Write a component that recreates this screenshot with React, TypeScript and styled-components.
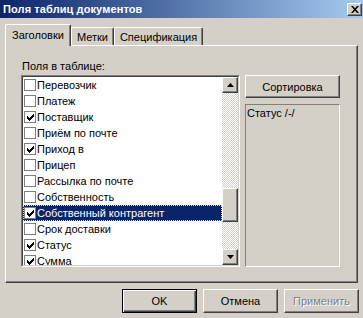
import React from 'react';
import styled, { createGlobalStyle, css } from 'styled-components';

const GlobalStyle = createGlobalStyle`
  html, body {
    margin: 0;
    padding: 0;
    background: #d4d0c8;
  }
  body {
    font-family: "Liberation Sans", Arial, sans-serif;
    font-size: 11px;
    color: #000;
  }
  * {
    box-sizing: border-box;
  }
`;

const raised = css`
  border: 1px solid;
  border-color: #fff #404040 #404040 #fff;
  box-shadow: inset -1px -1px 0 #808080;
  background: #d4d0c8;
`;

const Window = styled.div`
  width: 363px;
  height: 318px;
  display: flex;
  flex-direction: column;
  background: #d4d0c8;
  overflow: hidden;
`;

const TitleBar = styled.div`
  height: 18px;
  display: flex;
  align-items: center;
  justify-content: space-between;
  padding: 0 1px 0 3px;
  background: linear-gradient(to right, #0a246a, #a6caf0);
`;

const Title = styled.span`
  color: #fff;
  font-weight: bold;
  font-size: 11px;
  letter-spacing: 0.1px;
`;

const CloseButton = styled.div`
  ${raised};
  width: 15px;
  height: 13px;
  display: flex;
  align-items: center;
  justify-content: center;
`;

const TabStrip = styled.div`
  display: flex;
  align-items: flex-end;
  height: 21px;
  margin: 6px 0 0 5px;
  position: relative;
  z-index: 1;
`;

const Tab = styled.div<{ $active?: boolean }>`
  display: flex;
  align-items: center;
  height: ${p => (p.$active ? 22 : 18)}px;
  padding: ${p => (p.$active ? '0 6px 2px' : '0 5px')};
  margin-bottom: ${p => (p.$active ? -1 : 0)}px;
  background: #d4d0c8;
  border-top: 1px solid #fff;
  border-left: 1px solid #fff;
  border-right: 1px solid #404040;
  box-shadow: inset -1px 0 0 #808080;
  border-radius: 2px 2px 0 0;
  white-space: nowrap;
`;

const Panel = styled.div`
  margin-left: 5px;
  width: 353px;
  height: 238px;
  border: 1px solid;
  border-color: #fff #404040 #404040 #fff;
  box-shadow: inset -1px -1px 0 #808080;
  padding: 14px 0 0 15px;
  display: flex;
  align-items: flex-start;
  gap: 5px;
`;

const LeftColumn = styled.div`
  display: flex;
  flex-direction: column;
`;

const FieldLabel = styled.div`
  line-height: 13px;
  height: 13px;
  margin: 0 0 2px 1px;
`;

const ListBox = styled.div`
  width: 219px;
  height: 192px;
  border: 1px solid;
  border-color: #808080 #fff #fff #808080;
`;

const ListInner = styled.div`
  height: 100%;
  border: 1px solid;
  border-color: #404040 #d4d0c8 #d4d0c8 #404040;
  background: #fff;
  display: flex;
`;

const Items = styled.div`
  flex: 1;
  overflow: hidden;
`;

const Row = styled.div<{ $selected?: boolean }>`
  height: 16px;
  display: flex;
  align-items: center;
  padding-left: 1px;
  gap: 1px;
  white-space: nowrap;
  background: ${p => (p.$selected ? '#0a246a' : '#fff')};
  color: ${p => (p.$selected ? '#fff' : '#000')};
  outline: ${p => (p.$selected ? '1px dotted #e8e0b0' : 'none')};
  outline-offset: -1px;
`;

const CheckBox = styled.div`
  width: 12px;
  height: 12px;
  flex: none;
  border: 1px solid #808080;
  background: #fff;
  display: flex;
  align-items: center;
  justify-content: center;
`;

const ScrollBar = styled.div`
  width: 16px;
  display: flex;
  flex-direction: column;
`;

const ScrollButton = styled.div`
  ${raised};
  width: 16px;
  height: 16px;
  flex: none;
  display: flex;
  align-items: center;
  justify-content: center;
`;

const Track = styled.div`
  flex: 1;
  background: repeating-conic-gradient(#fff 0 25%, #d4d0c8 0 50%) 0 0 / 2px 2px;
`;

const Thumb = styled.div`
  ${raised};
  width: 16px;
  height: 34px;
`;

const RightColumn = styled.div`
  width: 95px;
  margin-top: 15px;
  display: flex;
  flex-direction: column;
  gap: 6px;
`;

const Button = styled.div<{ $default?: boolean; $disabled?: boolean }>`
  height: ${p => p.$default !== undefined ? 24 : 23}px;
  width: 75px;
  display: flex;
  align-items: center;
  justify-content: center;
  background: #d4d0c8;
  border: 1px solid;
  border-color: ${p => (p.$default ? '#000' : '#fff #404040 #404040 #fff')};
  box-shadow: ${p =>
    p.$default
      ? 'inset 1px 1px 0 #fff, inset -1px -1px 0 #404040, inset -2px -2px 0 #808080'
      : 'inset -1px -1px 0 #808080'};
  color: ${p => (p.$disabled ? '#808080' : '#000')};
  text-shadow: ${p => (p.$disabled ? '1px 1px 0 #fff' : 'none')};
`;

const SortButton = styled(Button)`
  width: 95px;
`;

const StaticBox = styled.div`
  height: 163px;
  border: 1px solid;
  border-color: #808080 #fff #fff #808080;
  padding: 2px 1px;
  line-height: 13px;
`;

const ButtonRow = styled.div`
  display: flex;
  justify-content: flex-end;
  gap: 6px;
  margin-top: 6px;
  padding-right: 4px;
`;

const CheckMark = () => (
  <svg width="7" height="7" viewBox="0 0 7 7">
    <path d="M0 2h1v1h1v1h1v-1h1v-1h1v-1h1v-1h1v3h-1v1h-1v1h-1v1h-1v1h-1v-1h-1v-1h-1z" fill="#000" />
  </svg>
);

const items = [
  { name: 'Перевозчик', checked: false },
  { name: 'Платеж', checked: false },
  { name: 'Поставщик', checked: true },
  { name: 'Приём по почте', checked: false },
  { name: 'Приход в', checked: true },
  { name: 'Прицеп', checked: false },
  { name: 'Рассылка по почте', checked: false },
  { name: 'Собственность', checked: false },
  { name: 'Собственный контрагент', checked: true, selected: true },
  { name: 'Срок доставки', checked: false },
  { name: 'Статус', checked: true },
  { name: 'Сумма', checked: true },
];

const App = () => {
  return (
    <Window>
      <GlobalStyle />
      <TitleBar>
        <Title>Поля таблиц документов</Title>
        <CloseButton>
          <svg width="8" height="7" viewBox="0 0 8 7">
            <path d="M0 0h2l2 2.2L6 0h2L5 3.5 8 7H6L4 4.8 2 7H0l3-3.5z" fill="#000" />
          </svg>
        </CloseButton>
      </TitleBar>

      <TabStrip>
        <Tab $active>Заголовки</Tab>
        <Tab>Метки</Tab>
        <Tab>Спецификация</Tab>
      </TabStrip>

      <Panel>
        <LeftColumn>
          <FieldLabel>Поля в таблице:</FieldLabel>
          <ListBox>
            <ListInner>
              <Items>
                {items.map(item => (
                  <Row key={item.name} $selected={item.selected}>
                    <CheckBox>{item.checked && <CheckMark />}</CheckBox>
                    <span>{item.name}</span>
                  </Row>
                ))}
              </Items>
              <ScrollBar>
                <ScrollButton>
                  <svg width="7" height="4" viewBox="0 0 7 4">
                    <path d="M3.5 0L7 4H0z" fill="#000" />
                  </svg>
                </ScrollButton>
                <Track>
                  <Thumb style={{ marginTop: 95 }} />
                </Track>
                <ScrollButton>
                  <svg width="7" height="4" viewBox="0 0 7 4">
                    <path d="M0 0h7L3.5 4z" fill="#000" />
                  </svg>
                </ScrollButton>
              </ScrollBar>
            </ListInner>
          </ListBox>
        </LeftColumn>

        <RightColumn>
          <SortButton>Сортировка</SortButton>
          <StaticBox>Статус /-/</StaticBox>
        </RightColumn>
      </Panel>

      <ButtonRow>
        <Button $default>OK</Button>
        <Button $default={false}>Отмена</Button>
        <Button $default={false} $disabled>Применить</Button>
      </ButtonRow>
    </Window>
  );
};

export default App;
